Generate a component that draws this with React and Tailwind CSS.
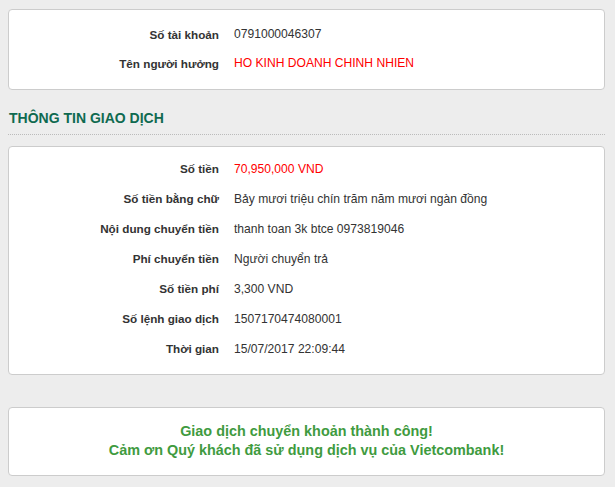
import React from 'react';

const account = [
  { label: 'Số tài khoản', value: '0791000046307' },
  { label: 'Tên người hưởng', value: 'HO KINH DOANH CHINH NHIEN', red: true },
];

const details = [
  { label: 'Số tiền', value: '70,950,000 VND', red: true },
  { label: 'Số tiền bằng chữ', value: 'Bảy mươi triệu chín trăm năm mươi ngàn đồng' },
  { label: 'Nội dung chuyển tiền', value: 'thanh toan 3k btce 0973819046' },
  { label: 'Phí chuyển tiền', value: 'Người chuyển trả' },
  { label: 'Số tiền phí', value: '3,300 VND' },
  { label: 'Số lệnh giao dịch', value: '1507170474080001' },
  { label: 'Thời gian', value: '15/07/2017 22:09:44' },
];

const Row = ({ label, value, red, h }) => (
  <div className={`flex items-center ${h}`}>
    <div className="w-[210px] shrink-0 text-right text-[11.7px] font-bold text-[#333333]">{label}</div>
    <div className={`pl-[15px] text-[12.1px] ${red ? 'text-[#ff0000]' : 'text-[#333333]'}`}>{value}</div>
  </div>
);

export default function App() {
  return (
    <div className="min-h-screen bg-[#ededed] pl-2 pr-[10px] pt-[9px] pb-[11px] font-['Liberation_Sans',Arial,sans-serif]">
      <div className="rounded-[4px] border border-[#cccccc] bg-white pt-[10px] pb-[11px]">
        {account.map((r) => (
          <Row key={r.label} {...r} h="h-[29px]" />
        ))}
      </div>

      <div className="mt-[18px] border-b border-dotted border-[#bbbbbb] pb-[6px]">
        <h2 className="pl-px text-[14px] font-bold leading-[20px] text-[#0f6a50]">THÔNG TIN GIAO DỊCH</h2>
      </div>

      <div className="mt-[11px] rounded-[4px] border border-[#cccccc] bg-white pt-[7px] pb-[10px]">
        {details.map((r) => (
          <Row key={r.label} {...r} h="h-[30px]" />
        ))}
      </div>

      <div className="mt-[32px] rounded-[4px] border border-[#cccccc] bg-white pt-[14px] pb-[15px] text-center text-[14.4px] font-bold leading-[19px] text-[#3f9b3f]">
        <p>Giao dịch chuyển khoản thành công!</p>
        <p>Cảm ơn Quý khách đã sử dụng dịch vụ của Vietcombank!</p>
      </div>
    </div>
  );
}
